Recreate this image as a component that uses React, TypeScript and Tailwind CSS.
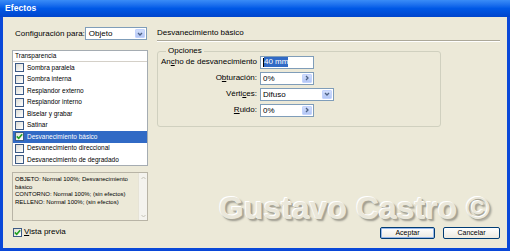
import React from 'react';

const font = { fontFamily: '"Liberation Sans", Arial, sans-serif' };

const CheckBox: React.FC<{ checked?: boolean }> = ({ checked }) => (
    <span className="w-[9px] h-[9px] shrink-0 border border-[#3c5a85] bg-gradient-to-br from-[#dcdcd5] to-white flex items-center justify-center">
        {checked && (
            <svg width="7" height="7" viewBox="0 0 7 7">
                <path d="M0.8 3.4 L2.7 5.3 L6.2 1.2" stroke="#22a022" strokeWidth="1.6" fill="none" />
            </svg>
        )}
    </span>
);

const DropButton: React.FC<{ kind: 'down' | 'right' }> = ({ kind }) => (
    <span className="w-[10px] self-stretch m-[1px] rounded-[1px] bg-gradient-to-b from-[#d2defb] to-[#b3c6f5] border border-[#c3d3fd] flex items-center justify-center">
        <svg width="6" height="6" viewBox="0 0 6 6">
            {kind === 'down' ? (
                <path d="M1 2 L3 4 L5 2" stroke="#4d6185" strokeWidth="1.3" fill="none" />
            ) : (
                <path d="M2 1 L4 3 L2 5" stroke="#4d6185" strokeWidth="1.3" fill="none" />
            )}
        </svg>
    </span>
);

const effects = [
    'Sombra paralela',
    'Sombra interna',
    'Resplandor externo',
    'Resplandor interno',
    'Biselar y grabar',
    'Satinar',
    'Desvanecimiento básico',
    'Desvanecimiento direccional',
    'Desvanecimiento de degradado',
];

const Field: React.FC<{ label: React.ReactNode; children: React.ReactNode }> = ({ label, children }) => (
    <div className="flex items-center h-[12px]">
        <span className="w-[102px] text-right pr-[3px] text-[8px] text-black whitespace-nowrap">{label}</span>
        {children}
    </div>
);

export default function App() {
    return (
        <div style={font} className="relative w-[510px] h-[251px] flex flex-col bg-[#0a48d8] overflow-hidden">
            {/* title bar */}
            <div className="h-[17px] shrink-0 bg-gradient-to-b from-[#3a8cf7] via-[#0058e6] to-[#0045cc] flex items-center pl-[5px]">
                <span className="text-white font-bold text-[8.5px] tracking-[0.1px]">Efectos</span>
            </div>

            {/* body */}
            <div className="flex-1 mx-[3px] mb-[3px] bg-[#ece9d8] flex pl-[9px] pr-[7px] pt-[8px] pb-[9px] gap-[9px]">
                {/* left column */}
                <div className="w-[136px] flex flex-col">
                    <div className="h-[17px] flex items-center">
                        <span className="pl-[3px] text-[8px] text-black whitespace-nowrap">
                            Confi<span className="underline">g</span>uración para:
                        </span>
                        <div className="ml-auto mr-[1px] w-[63px] h-[13px] bg-white border border-[#7f9db9] flex items-stretch">
                            <span className="flex-1 pl-[3px] text-[8px] leading-[11px] text-black">Objeto</span>
                            <DropButton kind="down" />
                        </div>
                    </div>

                    <div className="mt-[8px] h-[116px] bg-white border border-[#a5acb2] flex flex-col">
                        <div className="h-[11px] shrink-0 border-b border-[#d4d0c8] flex items-center pl-[2px] text-[6.5px] text-black">
                            Transparencia
                        </div>
                        {effects.map((e) => {
                            const sel = e === 'Desvanecimiento básico';
                            return (
                                <div
                                    key={e}
                                    className={`h-[11.5px] shrink-0 flex items-center gap-[3px] pl-[2px] text-[6.5px] whitespace-nowrap ${sel ? 'bg-[#316ac5] text-white' : 'text-black'}`}
                                >
                                    <CheckBox checked={sel} />
                                    <span>{e}</span>
                                </div>
                            );
                        })}
                    </div>

                    <div className="mt-[6px] h-[49px] border border-[#b8b4a6] bg-[#ece9d8] flex">
                        <div className="flex-1 pl-[2px] pt-[3px] text-[6px] leading-[7.6px] text-black">
                            OBJETO: Normal 100%; Desvanecimiento
                            <br />
                            básico
                            <br />
                            CONTORNO: Normal 100%; (sin efectos)
                            <br />
                            RELLENO: Normal 100%; (sin efectos)
                        </div>
                        <div className="w-[9px] flex flex-col justify-between bg-[#f4f3ee] border-l border-[#e6e3d6]">
                            <span className="h-[9px] flex items-center justify-center">
                                <svg width="5" height="4" viewBox="0 0 5 4">
                                    <path d="M0.5 3 L2.5 1 L4.5 3" stroke="#c4c2b6" strokeWidth="1" fill="none" />
                                </svg>
                            </span>
                            <span className="h-[9px] flex items-center justify-center">
                                <svg width="5" height="4" viewBox="0 0 5 4">
                                    <path d="M0.5 1 L2.5 3 L4.5 1" stroke="#c4c2b6" strokeWidth="1" fill="none" />
                                </svg>
                            </span>
                        </div>
                    </div>

                    <div className="mt-auto flex items-center gap-[2px] pl-[1px] mb-[1px]">
                        <CheckBox checked />
                        <span className="text-[8px] text-black">
                            <span className="underline">V</span>ista previa
                        </span>
                    </div>
                </div>

                {/* right column */}
                <div className="flex-1 flex flex-col">
                    <div className="h-[16px] flex items-center border-b border-[#aca899] shadow-[0_1px_0_#ffffff] text-[8px] text-black">
                        Desvanecimiento básico
                    </div>

                    <div className="relative mt-[10px] w-[284px] h-[76px] border border-[#d0d0bf] rounded-[3px] flex flex-col gap-[4px] pt-[4px]">
                        <span className="absolute -top-[6px] left-[8px] px-[2px] bg-[#ece9d8] text-[8px] leading-[10px] text-black">
                            Opciones
                        </span>
                        <Field label={<>An<span className="underline">c</span>ho de desvanecimiento</>}>
                            <div className="w-[54px] h-[13px] bg-white border border-[#7f9db9] flex items-center pl-[2px]">
                                <span className="w-[1px] h-[9px] bg-black" />
                                <span className="bg-[#316ac5] text-white text-[8px] leading-[10px]">40 mm</span>
                            </div>
                        </Field>
                        <Field label={<>O<span className="underline">b</span>turación:</>}>
                            <div className="w-[54px] h-[13px] bg-white border border-[#7f9db9] flex items-stretch">
                                <span className="flex-1 pl-[2px] text-[8px] leading-[11px] text-black">0%</span>
                                <DropButton kind="right" />
                            </div>
                        </Field>
                        <Field label={<>Vérti<span className="underline">c</span>es:</>}>
                            <div className="w-[74px] h-[13px] bg-white border border-[#7f9db9] flex items-stretch">
                                <span className="flex-1 pl-[2px] text-[8px] leading-[11px] text-black">Difuso</span>
                                <DropButton kind="down" />
                            </div>
                        </Field>
                        <Field label={<><span className="underline">R</span>uido:</>}>
                            <div className="w-[54px] h-[13px] bg-white border border-[#7f9db9] flex items-stretch">
                                <span className="flex-1 pl-[2px] text-[8px] leading-[11px] text-black">0%</span>
                                <DropButton kind="right" />
                            </div>
                        </Field>
                    </div>

                    <div className="mt-auto flex justify-end gap-[8px]">
                        <button className="w-[55px] h-[12px] rounded-[2px] border border-[#003c74] bg-gradient-to-b from-white to-[#ece9e0] shadow-[inset_0_0_0_1px_#98b8ea] text-[7px] leading-[10px] text-black">
                            Aceptar
                        </button>
                        <button className="w-[57px] h-[12px] rounded-[2px] border border-[#003c74] bg-gradient-to-b from-white to-[#ece9e0] text-[7px] leading-[10px] text-black">
                            Cancelar
                        </button>
                    </div>
                </div>
            </div>

            {/* watermark */}
            <div
                className="pointer-events-none absolute left-[219px] top-[184px] text-[32px] font-bold text-[#eae7da] whitespace-nowrap"
                style={{ textShadow: '-1px -1px 0 #ffffff, 1px 1px 0 #a9a698, 2px 2px 2px rgba(0,0,0,0.35)' }}
            >
                Gustavo Castro ©
            </div>
        </div>
    );
}
